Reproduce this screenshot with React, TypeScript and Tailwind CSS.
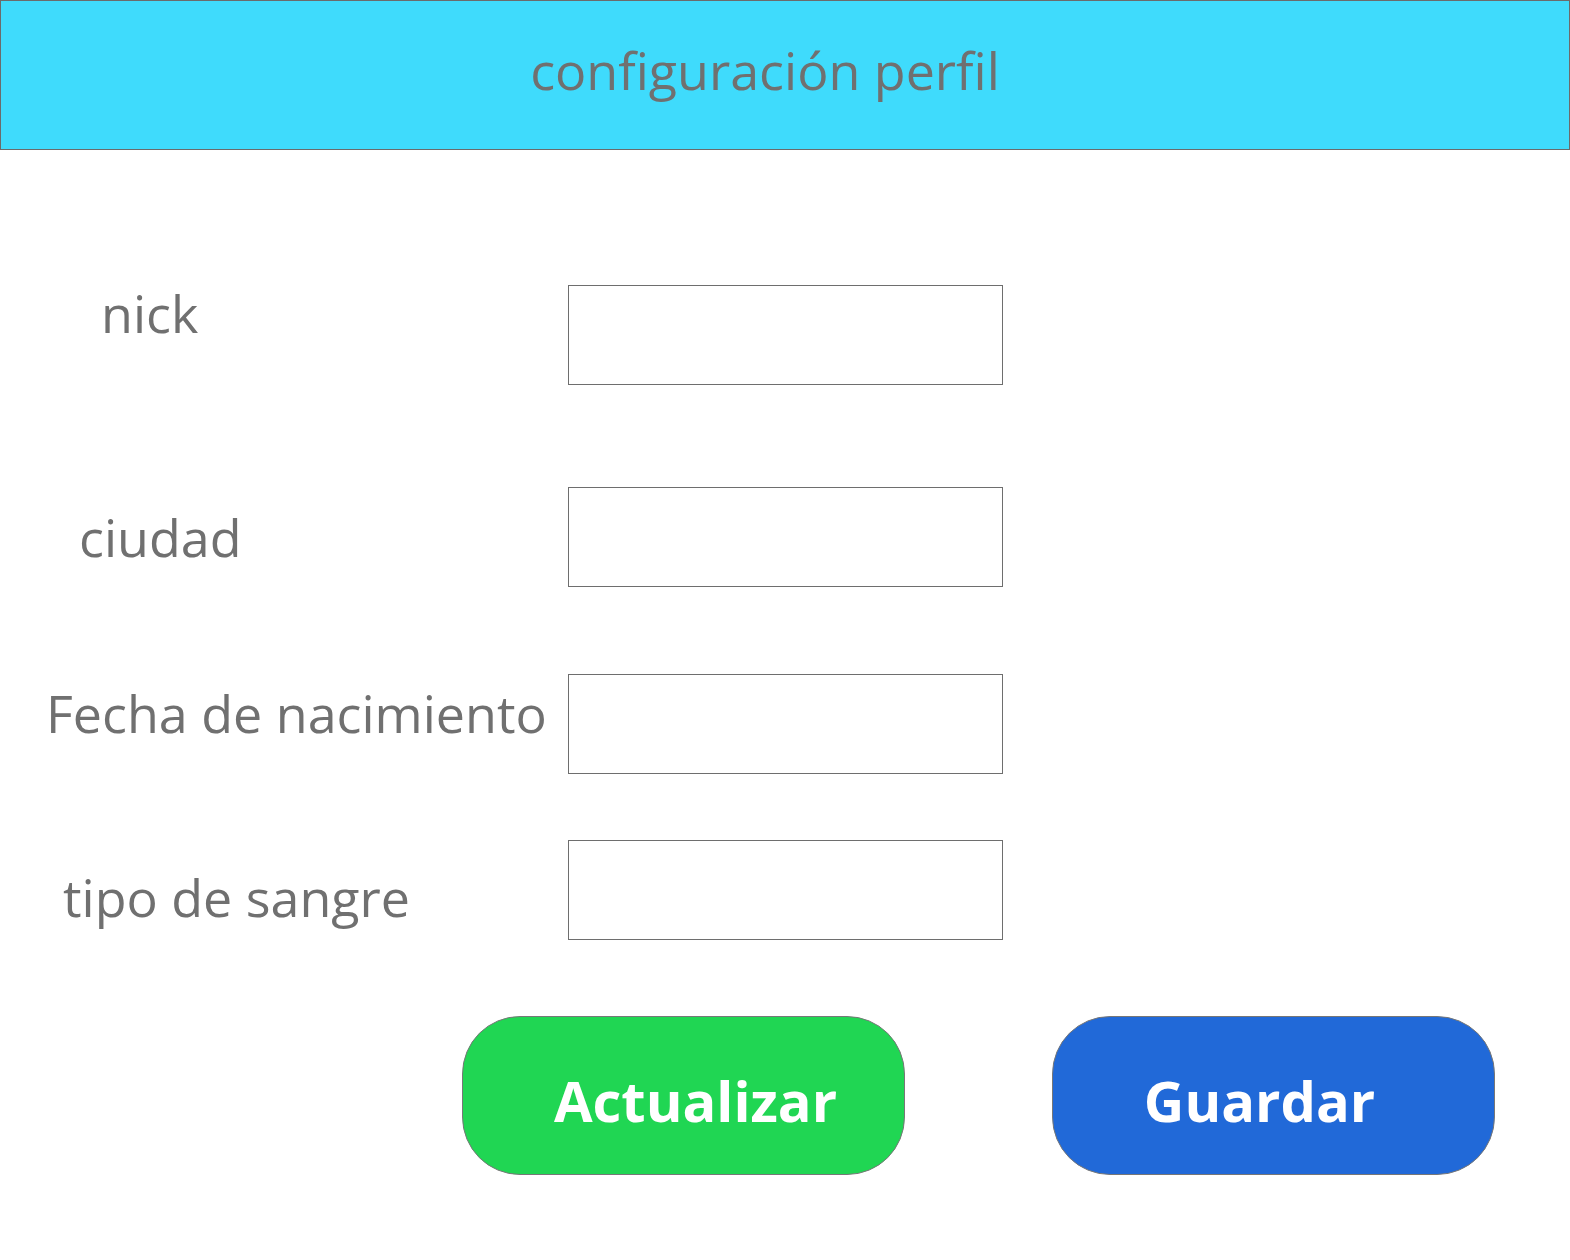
import React from "react";

const labelCls =
  "shrink-0 w-[568px] text-[52px] leading-none text-[#707070] whitespace-nowrap";
const boxCls = "shrink-0 w-[435px] h-[100px] border border-[#6e6e6e] bg-white";

export default function App() {
  return (
    <div className="w-[1570px] h-[1260px] bg-white font-['Open_Sans',sans-serif]">
      <div className="h-[150px] border border-[#6b6b6b] bg-[#3fdbfc] flex justify-center pr-[40px] pt-[43px]">
        <h1 className="text-[52px] leading-none font-normal text-[#707070]">configuración perfil</h1>
      </div>

      <div className="pt-[135px] flex flex-col">
        <div className="flex">
          <div className={`${labelCls} pl-[101px] pt-[2px]`}>nick</div>
          <div className={boxCls} />
        </div>
        <div className="flex mt-[102px]">
          <div className={`${labelCls} pl-[79px] pt-[24px]`}>ciudad</div>
          <div className={boxCls} />
        </div>
        <div className="flex mt-[87px]">
          <div className={`${labelCls} pl-[46px] pt-[13px]`}>Fecha de nacimiento</div>
          <div className={boxCls} />
        </div>
        <div className="flex mt-[66px]">
          <div className={`${labelCls} pl-[63px] pt-[31px]`}>tipo de sangre</div>
          <div className={boxCls} />
        </div>

        <div className="flex mt-[76px] pl-[462px] gap-[147px]">
          <button className="w-[443px] h-[159px] rounded-[58px] border border-[#777777] bg-[#20d653] flex items-center justify-center pl-[24px] pt-[8px] text-white text-[56px] font-bold leading-none">
            Actualizar
          </button>
          <button className="w-[443px] h-[159px] rounded-[58px] border border-[#777777] bg-[#2169d8] flex items-center justify-center pr-[28px] pt-[8px] text-white text-[56px] font-bold leading-none">
            Guardar
          </button>
        </div>
      </div>
    </div>
  );
}
